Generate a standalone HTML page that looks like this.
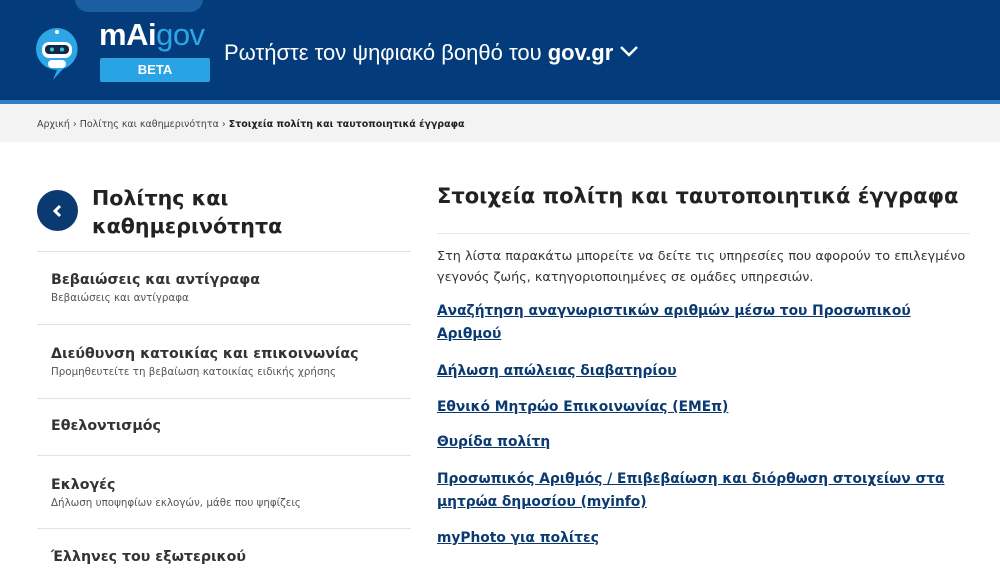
<!DOCTYPE html>
<html><head><meta charset="utf-8"><style>
*{margin:0;padding:0;box-sizing:border-box}
body{width:1000px;height:569px;overflow:hidden;background:#fff;font-family:"DejaVu Sans","Liberation Sans",sans-serif;color:#222;position:relative}
.hdr{position:absolute;left:0;top:0;width:1000px;height:100px;background:#033b7b}
.stripe{position:absolute;left:0;top:100px;width:1000px;height:4px;background:#2f7fc7}
.bc{position:absolute;left:0;top:104px;width:1000px;height:38px;background:#f3f3f3;font-size:9.5px;color:#444;padding:15px 0 0 37px}
.bc b{color:#222}
.a{position:absolute}
.item{position:absolute;left:37px;width:374px;border-top:1px solid #e2e2e2;padding-left:14px}
.item .t{font-size:14.2px;font-weight:bold;color:#333}
.item .s{font-size:10.3px;color:#555;margin-top:4px}
.lk{position:absolute;left:437px;font-size:13.8px;font-weight:bold;color:#0b3a72;text-decoration:underline;line-height:23px;width:540px}
</style></head><body>
<div class="hdr"></div>
<div class="a" style="left:75px;top:-14px;width:128px;height:26px;background:#1b5fa0;border-radius:13px"></div>
<svg class="a" style="left:30px;top:22px" width="62" height="62" viewBox="0 0 62 62">
<path d="M27 6a21 21 0 1 0 0 42l-4 10 10-11A21 21 0 0 0 27 6z" fill="#2ea6e6"/>
<rect x="12" y="20" width="30" height="16" rx="7" fill="#fff"/>
<rect x="15" y="23" width="24" height="9" rx="4" fill="#12284a"/>
<circle cx="22" cy="27.5" r="2" fill="#3cc"/><circle cx="32" cy="27.5" r="2" fill="#3cc"/>
<rect x="18" y="38" width="18" height="8" rx="4" fill="#fff"/>
<circle cx="27" cy="10" r="2" fill="#fff"/>
</svg>
<div class="a" style="left:99px;top:17px;font-family:'Liberation Sans',sans-serif;font-size:31px;font-weight:bold;color:#fff;letter-spacing:-0.5px">mAi<span style="color:#2ea6e6;font-weight:normal">gov</span></div>
<div class="a" style="left:100px;top:58px;width:110px;height:24px;background:#2aa3e4;border-radius:2px;color:#fff;font-family:'Liberation Sans',sans-serif;font-size:13px;font-weight:bold;text-align:center;line-height:24px">BETA</div>
<div class="a" style="left:224px;top:40px;font-family:'Liberation Sans',sans-serif;font-size:22px;color:#fff;white-space:nowrap">Ρωτήστε τον ψηφιακό βοηθό του <b>gov.gr</b></div>
<svg class="a" style="left:619px;top:45px" width="20" height="14"><path d="M2 2l8 8 8-8" stroke="#fff" stroke-width="2.5" fill="none"/></svg>
<div class="stripe"></div>
<div class="bc">Αρχική › Πολίτης και καθημερινότητα › <b>Στοιχεία πολίτη και ταυτοποιητικά έγγραφα</b></div>

<div class="a" style="left:37px;top:190px;width:41px;height:41px;border-radius:50%;background:#0b3a72"></div>
<svg class="a" style="left:51px;top:203px" width="14" height="16"><path d="M9 3l-5 5 5 5" stroke="#fff" stroke-width="3" fill="none"/></svg>
<div class="a" style="left:92px;top:184px;font-size:20.6px;font-weight:bold;line-height:28px;color:#222">Πολίτης και<br>καθημερινότητα</div>

<div class="item" style="top:251px;height:73px;padding-top:20px"><div class="t">Βεβαιώσεις και αντίγραφα</div><div class="s">Βεβαιώσεις και αντίγραφα</div></div>
<div class="item" style="top:324px;height:74px;padding-top:21px"><div class="t">Διεύθυνση κατοικίας και επικοινωνίας</div><div class="s">Προμηθευτείτε τη βεβαίωση κατοικίας ειδικής χρήσης</div></div>
<div class="item" style="top:398px;height:57px;padding-top:19px"><div class="t">Εθελοντισμός</div></div>
<div class="item" style="top:455px;height:73px;padding-top:21px"><div class="t">Εκλογές</div><div class="s">Δήλωση υποψηφίων εκλογών, μάθε που ψηφίζεις</div></div>
<div class="item" style="top:528px;height:60px;padding-top:20px"><div class="t">Έλληνες του εξωτερικού</div></div>

<div class="a" style="left:437px;top:184px;font-size:21px;font-weight:bold;color:#222;white-space:nowrap">Στοιχεία πολίτη και ταυτοποιητικά έγγραφα</div>
<div class="a" style="left:437px;top:233px;width:533px;border-top:1px solid #e6e6e6"></div>
<div class="a" style="left:437px;top:246px;font-size:12.8px;color:#333;line-height:21px;width:540px">Στη λίστα παρακάτω μπορείτε να δείτε τις υπηρεσίες που αφορούν το επιλεγμένο γεγονός ζωής, κατηγοριοποιημένες σε ομάδες υπηρεσιών.</div>
<div class="lk" style="top:300px">Αναζήτηση αναγνωριστικών αριθμών μέσω του Προσωπικού<br>Αριθμού</div>
<div class="lk" style="top:360px">Δήλωση απώλειας διαβατηρίου</div>
<div class="lk" style="top:396px">Εθνικό Μητρώο Επικοινωνίας (ΕΜΕπ)</div>
<div class="lk" style="top:431px">Θυρίδα πολίτη</div>
<div class="lk" style="top:468px">Προσωπικός Αριθμός / Επιβεβαίωση και διόρθωση στοιχείων στα<br>μητρώα δημοσίου (myinfo)</div>
<div class="lk" style="top:527px">myPhoto για πολίτες</div>
</body></html>
